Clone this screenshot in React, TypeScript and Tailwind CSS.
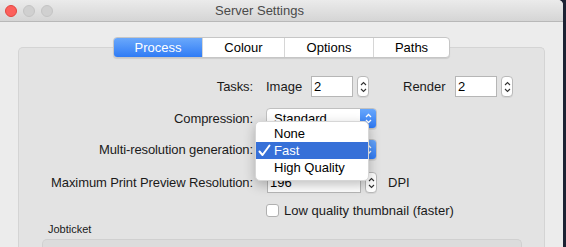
import React from "react";

const font = { fontFamily: '"Liberation Sans", Arial, sans-serif' };

function Stepper() {
  return (
    <div className="flex h-[21px] w-[12px] flex-col items-center justify-center rounded-[4px] border border-[#b9b9b9] bg-white shadow-[0_1px_0_rgba(0,0,0,0.06)]">
      <svg width="7" height="14" viewBox="0 0 7 14" fill="none" stroke="#333" strokeWidth="1.1">
        <path d="M1 5 L3.5 2.5 L6 5" />
        <path d="M1 9 L3.5 11.5 L6 9" />
      </svg>
    </div>
  );
}

function Field({ value, w }: { value: string; w: string }) {
  return (
    <div className={`flex h-[21px] items-center border border-[#b6b6b6] bg-white pl-[2px] text-[13px] text-black ${w}`}>
      {value}
    </div>
  );
}

function Popup({ value }: { value: string }) {
  return (
    <div className="flex h-[21px] w-[111px] overflow-hidden rounded-[4px] border border-[#c0c0c0] bg-white shadow-[0_1px_0_rgba(0,0,0,0.08)]">
      <div className="flex flex-1 items-center pl-[7px] text-[13px] text-black">{value}</div>
      <div className="flex w-[16px] items-center justify-center bg-gradient-to-b from-[#67a6fb] to-[#2e7af5]">
        <svg width="7" height="13" viewBox="0 0 7 13" fill="none" stroke="white" strokeWidth="1.3">
          <path d="M1 5 L3.5 2.5 L6 5" />
          <path d="M1 8 L3.5 10.5 L6 8" />
        </svg>
      </div>
    </div>
  );
}

function Row({ label, children, className = "" }: { label: string; children?: React.ReactNode; className?: string }) {
  return (
    <div className={`flex h-[21px] items-center ${className}`}>
      <div className="w-[234px] text-right text-[13px] tracking-[-0.1px] text-[#1a1a1a]">{label}</div>
      <div className="relative ml-[13px] flex items-center">{children}</div>
    </div>
  );
}

export default function App() {
  const tabs = ["Process", "Colour", "Options", "Paths"];
  const widths = ["w-[88px]", "w-[82px]", "w-[89px]", "w-[76px]"];
  return (
    <div className="flex h-[247px] w-[566px] overflow-hidden bg-[#1c2233]" style={font}>
      <div className="flex h-full w-[563px] flex-col rounded-tr-[5px] bg-[#ececec]">
        {/* Title bar */}
        <div className="relative flex h-[22px] shrink-0 items-center justify-center rounded-tr-[5px] border-b border-[#b8b8b8] bg-gradient-to-b from-[#ebebeb] to-[#d5d5d5] pr-[44px]">
          <div className="absolute left-[5px] top-[5px] flex gap-[6px]">
            <div className="h-[12px] w-[12px] rounded-full border border-[#e2463f] bg-[#fc605c]" />
            <div className="h-[12px] w-[12px] rounded-full border border-[#c4c4c4] bg-[#d0d0d0]" />
            <div className="h-[12px] w-[12px] rounded-full border border-[#c4c4c4] bg-[#d0d0d0]" />
          </div>
          <span className="text-[13px] text-[#4a4a4a]">Server Settings</span>
        </div>

        {/* Tabs */}
        <div className="relative z-10 mt-[15px] flex justify-center">
          <div className="flex h-[21px] overflow-hidden rounded-[4px] border border-[#c6c6c6] bg-white shadow-[0_1px_1px_rgba(0,0,0,0.1)]">
            {tabs.map((t, i) =>
              i === 0 ? (
                <div
                  key={t}
                  className={`${widths[i]} flex items-center justify-center bg-gradient-to-b from-[#6aa8fb] to-[#2f7bf5] text-[13px] text-white`}
                >
                  {t}
                </div>
              ) : (
                <div
                  key={t}
                  className={`${widths[i]} flex items-center justify-center border-l border-[#d6d6d6] text-[13px] text-black`}
                >
                  {t}
                </div>
              )
            )}
          </div>
        </div>

        {/* Tab panel */}
        <div className="mx-[18px] -mt-[11px] flex-1 rounded-t-[5px] border border-b-0 border-[#d4d4d4] bg-[#e3e3e3] pt-[28px]">
          <Row label="Tasks:">
            <span className="w-[45px] text-[13px] text-[#1a1a1a]">Image</span>
            <Field value="2" w="w-[42px]" />
            <div className="ml-[4px]">
              <Stepper />
            </div>
            <span className="ml-[34px] w-[52px] text-[13px] text-[#1a1a1a]">Render</span>
            <Field value="2" w="w-[42px]" />
            <div className="ml-[4px]">
              <Stepper />
            </div>
          </Row>

          <Row label="Compression:" className="mt-[11px]">
            <Popup value="Standard" />
          </Row>

          <Row label="Multi-resolution generation:" className="mt-[10px]">
            <Popup value="Fast" />
            {/* Open menu */}
            <div className="absolute left-[-11px] top-[-18px] z-20 w-[114px] rounded-[5px] border border-[#d6d6d6] bg-white pt-[3px] pb-[4px] shadow-[0_4px_12px_rgba(0,0,0,0.25)]">
              <div className="flex h-[17px] items-center pl-[18px] text-[13px] text-black">None</div>
              <div className="relative flex h-[17px] items-center bg-[#3670d8] pl-[18px] text-[13px] text-white">
                <svg className="absolute left-[2px] top-[2px]" width="13" height="13" viewBox="0 0 13 13" fill="none" stroke="white" strokeWidth="2" strokeLinecap="round" strokeLinejoin="round">
                  <path d="M1.5 7.5 L4.5 11 L11.5 1.5" />
                </svg>
                Fast
              </div>
              <div className="flex h-[17px] items-center pl-[18px] text-[13px] text-black">High Quality</div>
            </div>
          </Row>

          <Row label="Maximum Print Preview Resolution:" className="mt-[12px]">
            <div className="ml-[1px]">
              <Field value="196" w="w-[94px]" />
            </div>
            <div className="ml-[4px]">
              <Stepper />
            </div>
            <span className="ml-[11px] text-[13px] text-[#1a1a1a]">DPI</span>
          </Row>

          <Row label="" className="mt-[7px]">
            <div className="h-[13px] w-[13px] rounded-[3px] border border-[#b0b0b0] bg-white" />
            <span className="ml-[5px] text-[13px] text-[#1a1a1a]">Low quality thumbnail (faster)</span>
          </Row>

          <div className="mt-[1px] pl-[29px] text-[11px] leading-[14px] text-[#1a1a1a]">Jobticket</div>
          <div className="ml-[23px] mr-[22px] mt-[3px] h-[20px] rounded-t-[5px] border border-b-0 border-[#d0d0d0] bg-[#dcdcdc]" />
        </div>
      </div>
    </div>
  );
}
